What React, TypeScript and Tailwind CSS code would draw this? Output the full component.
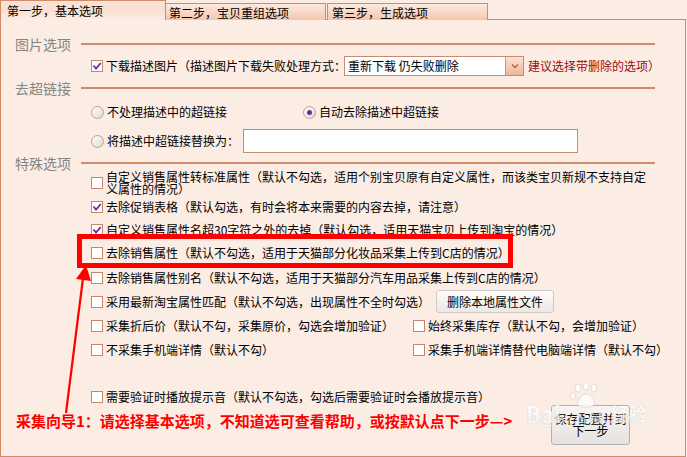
import React from "react";

function Check({ checked = false }: { checked?: boolean }) {
  return (
    <span className="relative flex h-[12px] w-[12px] shrink-0 items-center justify-center border border-[#c4876a] bg-white">
      {checked && (
        <svg width="10" height="10" viewBox="0 0 10 10" className="absolute left-[0px] top-[0px]">
          <path d="M1.5 4.5 L4 7.5 L8.8 2" fill="none" stroke="#6a2c9c" strokeWidth="1.8" />
        </svg>
      )}
    </span>
  );
}

function Radio({ checked = false }: { checked?: boolean }) {
  return (
    <span className="flex h-[13px] w-[13px] shrink-0 items-center justify-center rounded-full border border-[#b9a291] bg-gradient-to-br from-white to-[#e2d7ce]">
      {checked && <span className="h-[5px] w-[5px] rounded-full bg-[#6a2c9c]" />}
    </span>
  );
}

function Heading({ text, h }: { text: string; h: string }) {
  return (
    <div className={`flex items-center pl-[14px] ${h}`}>
      <span className="w-[66px] text-[14px] leading-[16px] text-[#858585]">{text}</span>
      <span className="mr-[30px] h-[2px] flex-1 bg-[#d38a68]" />
    </div>
  );
}

function Row({ h, children }: { h: string; children: React.ReactNode }) {
  return <div className={`flex items-center pl-[90px] ${h}`}>{children}</div>;
}

function Label({ children, className = "" }: { children: React.ReactNode; className?: string }) {
  return <span className={`ml-[3px] whitespace-nowrap text-[12px] leading-[14px] text-black ${className}`}>{children}</span>;
}

export default function App() {
  return (
    <div className="relative h-[457px] w-[687px] overflow-hidden bg-[#fcede4] font-['Noto_Sans_CJK_SC',sans-serif]">
      {/* tabs */}
      <div className="flex h-[20px] items-end">
        <div className="relative z-10 h-[20px] w-[166px] border-l border-r border-t border-[#d28a69] bg-gradient-to-b from-[#fbe2d4] via-[#fae0d2] to-[#fcede4] pl-[6px] pt-[3px] text-[12px] leading-[14px] text-black">
          第一步，基本选项
        </div>
        <div className="h-[17px] w-[160px] border-r border-t border-[#d28a69] bg-gradient-to-b from-[#fdeae0] to-[#f4c5ae] pl-[3px] pt-[2px] text-[12px] leading-[14px] text-black">
          第二步，宝贝重组选项
        </div>
        <div className="ml-[1px] h-[17px] w-[161px] border-l border-r border-t border-[#d28a69] bg-gradient-to-b from-[#fdeae0] to-[#f4c5ae] pl-[4px] pt-[2px] text-[12px] leading-[14px] text-black">
          第三步，生成选项
        </div>
      </div>

      {/* panel */}
      <div className="-mt-[1px] flex h-[438px] w-[686px] flex-col border border-[#d28a69] bg-[#fcede4] pt-[14px]">
        <Heading text="图片选项" h="h-[20px]" />
        <Row h="h-[24px]">
          <Check checked />
          <Label>下载描述图片（描述图片下载失败处理方式：</Label>
          <div className="-ml-[2px] flex h-[20px] w-[180px] items-center border border-[#c98b6d] bg-white">
            <span className="flex-1 pl-[3px] text-[12px] leading-[14px] text-black">重新下载 仍失败删除</span>
            <span className="flex h-full w-[18px] items-center justify-center border-l border-[#d49478] bg-gradient-to-b from-[#fbe3d6] to-[#eeb498]">
              <svg width="8" height="6" viewBox="0 0 8 6">
                <path d="M1 1.5 L4 4.5 L7 1.5" fill="none" stroke="#b4673f" strokeWidth="1.3" />
              </svg>
            </span>
          </div>
          <span className="ml-[4px] whitespace-nowrap text-[12px] leading-[14px] text-[#9b0a0a]">建议选择带删除的选项）</span>
        </Row>

        <Heading text="去超链接" h="h-[20px]" />
        <Row h="h-[28px]">
          <div className="flex w-[212px] items-center">
            <Radio />
            <Label>不处理描述中的超链接</Label>
          </div>
          <Radio checked />
          <Label>自动去除描述中超链接</Label>
        </Row>
        <Row h="h-[30px]">
          <Radio />
          <Label>将描述中超链接替换为：</Label>
          <div className="ml-[4px] h-[24px] w-[335px] border border-[#c98b6d] bg-white" />
        </Row>

        <Heading text="特殊选项" h="h-[14px]" />
        <Row h="h-[26px]">
          <Check />
          <span className="ml-[3px] w-[545px] text-[12px] leading-[12px] text-black">
            自定义销售属性转标准属性（默认不勾选，适用个别宝贝原有自定义属性，而该类宝贝新规不支持自定义属性的情况）
          </span>
        </Row>
        <Row h="h-[22px]">
          <Check checked />
          <Label>去除促销表格（默认勾选，有时会将本来需要的内容去掉，请注意）</Label>
        </Row>
        <Row h="h-[23px]">
          <Check checked />
          <Label>自定义销售属性名超30字符之外的去掉（默认勾选，适用天猫宝贝上传到淘宝的情况）</Label>
        </Row>
        <Row h="h-[24px]">
          <Check />
          <Label>去除销售属性（默认不勾选，适用于天猫部分化妆品采集上传到C店的情况）</Label>
        </Row>
        <Row h="h-[25px]">
          <Check />
          <Label>去除销售属性别名（默认不勾选，适用于天猫部分汽车用品采集上传到C店的情况）</Label>
        </Row>
        <Row h="h-[23px]">
          <Check />
          <Label>采用最新淘宝属性匹配（默认不勾选，出现属性不全时勾选）</Label>
          <button className="ml-[6px] h-[23px] w-[118px] rounded-[3px] border border-[#cfc8c3] bg-gradient-to-b from-[#fdfdfd] to-[#ebe8e6] text-[12px] leading-[14px] text-black">
            删除本地属性文件
          </button>
        </Row>
        <Row h="h-[26px]">
          <div className="flex w-[322px] items-center">
            <Check />
            <Label>采集折后价（默认不勾，采集原价，勾选会增加验证）</Label>
          </div>
          <Check />
          <Label>始终采集库存（默认不勾，会增加验证）</Label>
        </Row>
        <Row h="h-[22px]">
          <div className="flex w-[322px] items-center">
            <Check />
            <Label>不采集手机端详情（默认不勾）</Label>
          </div>
          <Check />
          <Label>采集手机端详情替代电脑端详情（默认不勾）</Label>
        </Row>
        <div className="h-[24px]" />

        <div className="flex">
          <div className="flex flex-1 flex-col">
            <Row h="h-[24px]">
              <Check />
              <Label>需要验证时播放提示音（默认不勾选，勾选后需要验证时会播放提示音）</Label>
            </Row>
            <div className="flex h-[24px] items-center pl-[15px]">
              <span className="whitespace-nowrap text-[15px] font-bold leading-[16px] text-[#ff0000]">
                采集向导1：请选择基本选项，不知道选可查看帮助，或按默认点下一步—&gt;
              </span>
            </div>
          </div>
          <button className="mr-[55px] mt-[20px] flex h-[40px] w-[79px] shrink-0 flex-col items-center justify-center rounded-[3px] border border-[#b4b0ad] bg-gradient-to-b from-[#f7f5f4] to-[#e6e2df] text-[12px] leading-[12px] text-black">
            <span>保存配置并到</span>
            <span>下一步</span>
          </button>
        </div>
      </div>

      {/* red highlight box */}
      <div className="pointer-events-none absolute left-[77px] top-[234px] h-[34px] w-[436px] border-[5px] border-[#ff0000]" />

      {/* red arrow */}
      <svg className="pointer-events-none absolute left-0 top-0" width="687" height="457" viewBox="0 0 687 457">
        <line x1="66" y1="413" x2="83" y2="278" stroke="#ff0000" strokeWidth="2.2" />
        <polygon points="86,265 91,281 76,279" fill="#ff0000" />
      </svg>

      {/* watermark */}
      <div className="pointer-events-none absolute left-[526px] top-[382px] opacity-75">
        <div className="flex items-end">
          <span className="text-[22px] font-bold leading-[22px] text-white [text-shadow:0_0_1px_#b8b0aa]">Bai</span>
          <svg width="34" height="28" viewBox="0 0 34 28" className="mb-[14px] ml-[8px]">
            <g fill="#ffffff" stroke="#c9c0ba" strokeWidth="0.6">
              <ellipse cx="9" cy="6" rx="3" ry="4" />
              <ellipse cx="17" cy="4" rx="3" ry="4" />
              <ellipse cx="25" cy="6" rx="3" ry="4" />
              <ellipse cx="4" cy="14" rx="2.5" ry="3.3" />
              <path d="M17 12 C22 12 28 20 24 24 C21 26 13 26 10 24 C6 20 12 12 17 12 Z" />
            </g>
          </svg>
          <span className="mb-[1px] ml-[8px] text-[18px] font-bold leading-[20px] text-white [text-shadow:0_0_1px_#b8b0aa]">经验</span>
        </div>
        <div className="-mt-[12px] pl-[2px] font-['DejaVu_Sans',sans-serif] text-[12px] leading-[14px] text-white [text-shadow:0_0_1px_#b8b0aa]">
          jingyan.baidu.com
        </div>
      </div>
    </div>
  );
}
